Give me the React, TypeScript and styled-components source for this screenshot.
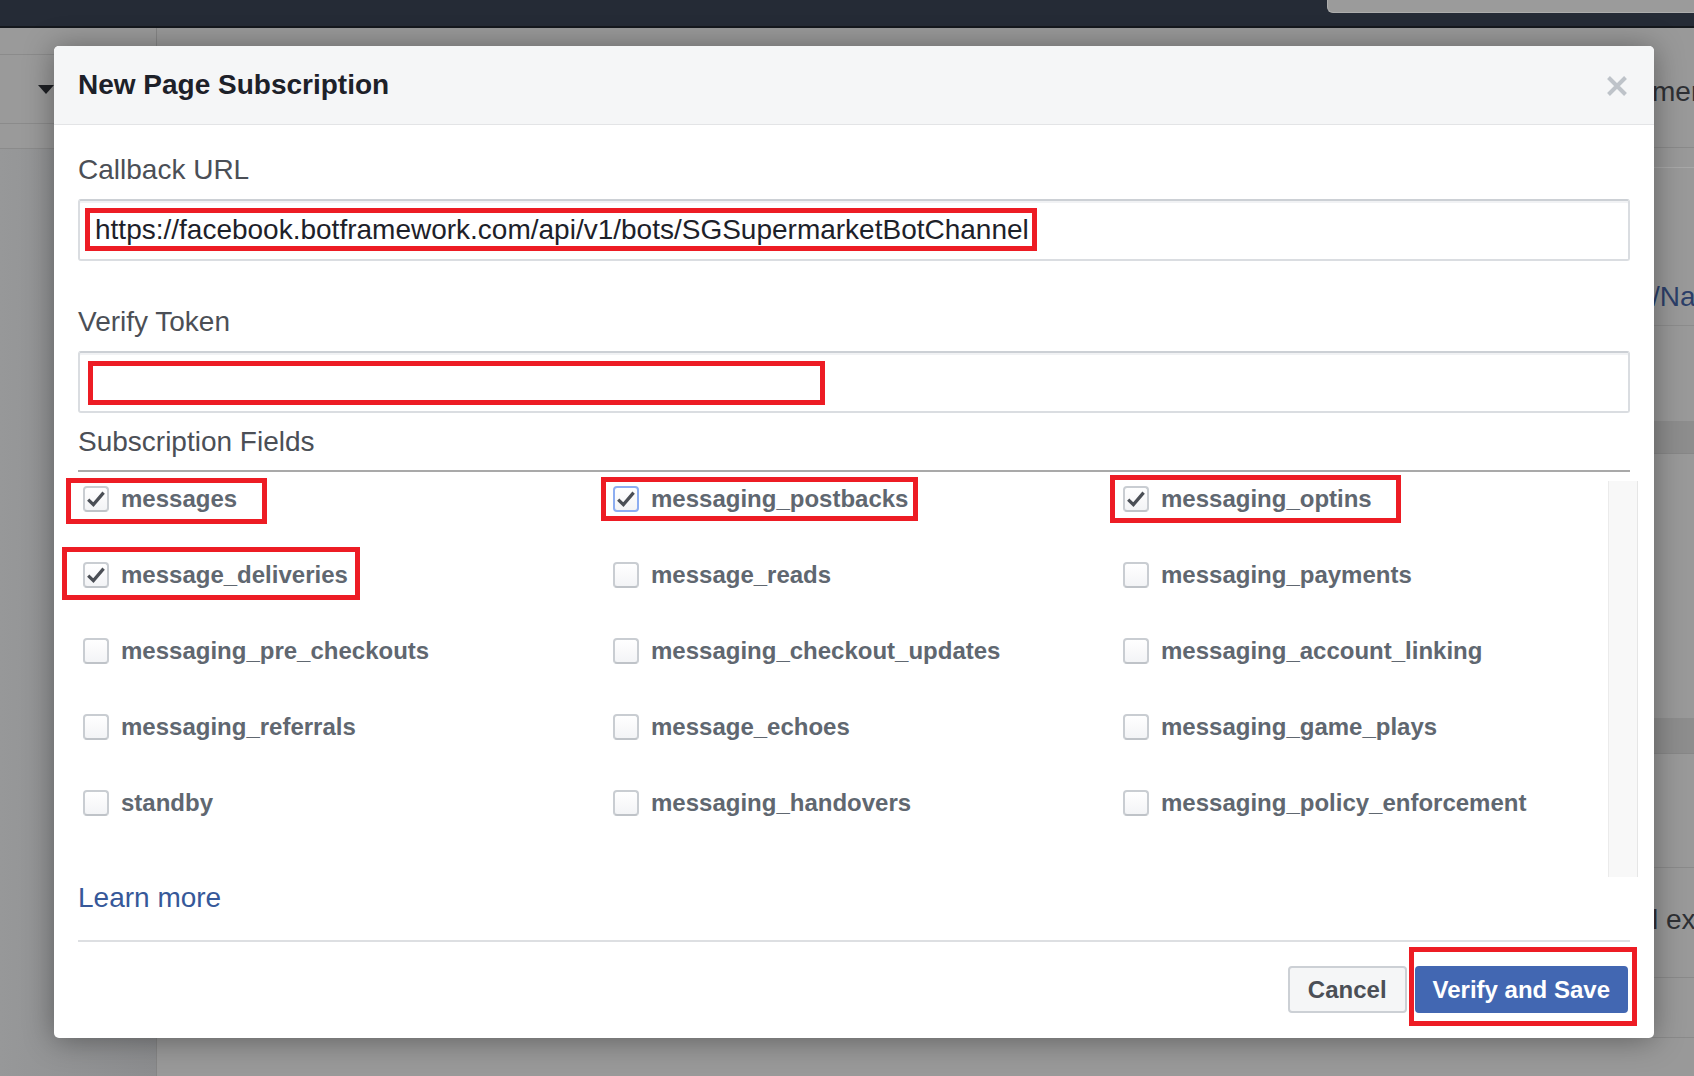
import React from "react";
import styled, { createGlobalStyle, css } from "styled-components";

const GlobalStyle = createGlobalStyle`
  html, body { margin: 0; padding: 0; }
  body {
    font-family: "Liberation Sans", Arial, Helvetica, sans-serif;
    background: #959595;
    overflow: hidden;
  }
  * { box-sizing: border-box; }
`;

/* ---------- dimmed page behind the dialog ---------- */

const Page = styled.div`
  position: relative;
  width: 1694px;
  height: 1076px;
  display: flex;
  flex-direction: column;
  background: #959595;
  overflow: hidden;
`;

const TopBar = styled.header`
  flex: none;
  height: 28px;
  background: #252b36;
  border-bottom: 2px solid #15181d;
  display: flex;
  justify-content: flex-end;
  align-items: flex-start;
`;

const SearchStub = styled.div`
  width: 367px;
  height: 13px;
  background: #9b9b9b;
  border-left: 1px solid #adadad;
  border-bottom: 1px solid #adadad;
  border-bottom-left-radius: 6px;
`;

const PageBody = styled.div`
  flex: 1;
  display: flex;
`;

const Sidebar = styled.aside`
  flex: none;
  width: 157px;
  display: flex;
  flex-direction: column;
  background: linear-gradient(90deg, #979899 0%, #8c8d8f 100%);
  border-right: 1px solid #858585;
`;

const SideBand = styled.div<{ $h: number; $pad?: number }>`
  height: ${(p) => p.$h}px;
  background: #9a9a9a;
  border-bottom: 1px solid #8b8b8b;
  display: flex;
  align-items: center;
  padding-left: ${(p) => p.$pad ?? 0}px;
`;

const Caret = styled.span`
  width: 0;
  height: 0;
  border-left: 8px solid transparent;
  border-right: 8px solid transparent;
  border-top: 9px solid #1e2024;
`;

const Main = styled.main`
  flex: 1;
  display: flex;
  justify-content: flex-end;
  background: #999999;
`;

const SideColumn = styled.div`
  width: 42px;
  display: flex;
  flex-direction: column;
  overflow: hidden;
`;

const StripRow = styled.div<{ $h: number; $top?: number; $band?: boolean; $line?: string }>`
  flex: none;
  height: ${(p) => p.$h}px;
  padding-top: ${(p) => p.$top ?? 0}px;
  background: ${(p) => (p.$band ? "#8d8d8d" : "transparent")};
  border-bottom: ${(p) => (p.$line ? `1px solid ${p.$line}` : "none")};
  white-space: nowrap;
  font-size: 28px;
  line-height: 32px;
`;

const StripText = styled.span<{ $link?: boolean }>`
  color: ${(p) => (p.$link ? "#2c3f69" : "#2e3034")};
`;

/* ---------- dialog ---------- */

const Dialog = styled.section`
  position: absolute;
  left: 54px;
  top: 46px;
  width: 1600px;
  background: #ffffff;
  border-radius: 5px;
  box-shadow: 0 2px 30px rgba(0, 0, 0, 0.38);
  display: flex;
  flex-direction: column;
`;

const DialogHeader = styled.div`
  height: 79px;
  padding: 0 26px 0 24px;
  background: #f5f6f7;
  border-bottom: 1px solid #e3e4e6;
  border-radius: 5px 5px 0 0;
  display: flex;
  align-items: center;
  justify-content: space-between;
`;

const Title = styled.h1`
  margin: 0;
  font-size: 28px;
  line-height: 32px;
  font-weight: bold;
  color: #1d2129;
`;

const CloseButton = styled.button`
  width: 22px;
  height: 22px;
  padding: 0;
  border: 0;
  background: none;
  display: flex;
  margin-top: 2px;
`;

const DialogBody = styled.div`
  padding: 29px 24px 0;
  display: flex;
  flex-direction: column;
`;

const FieldLabel = styled.label<{ $gap?: number }>`
  margin-top: ${(p) => p.$gap ?? 0}px;
  font-size: 28px;
  line-height: 32px;
  color: #4b4f56;
`;

const TextField = styled.div`
  position: relative;
  margin-top: 13px;
  height: 62px;
  padding: 0 15px;
  border: 2px solid #dadde1;
  border-top-color: #ccd0d5;
  border-radius: 3px;
  box-shadow: inset 0 2px 0 #f1f2f4;
  display: flex;
  align-items: center;
  font-size: 28px;
  line-height: 32px;
  color: #1d2129;
  white-space: nowrap;
`;

const Callout = styled.span<{ $x: number; $y: number; $w: number; $h: number }>`
  position: absolute;
  left: ${(p) => p.$x}px;
  top: ${(p) => p.$y}px;
  width: ${(p) => p.$w}px;
  height: ${(p) => p.$h}px;
  border: 5px solid #ed1c24;
  pointer-events: none;
`;

const SectionHeader = styled.div`
  margin-top: 13px;
  padding-bottom: 12px;
  border-bottom: 2px solid #a9a9a9;
  font-size: 28px;
  line-height: 32px;
  color: #4b4f56;
`;

const FieldsArea = styled.div`
  margin-top: 8px;
  margin-right: -8px;
  height: 397px;
  display: flex;
`;

const FieldGrid = styled.div`
  flex: 1;
  padding-top: 1px;
  display: grid;
  grid-template-columns: 530px 510px 1fr;
  grid-auto-rows: 35px;
  row-gap: 41px;
  align-content: start;
`;

const ScrollTrack = styled.div`
  flex: none;
  width: 30px;
  margin-top: 1px;
  background: #f8f8f8;
  border-left: 1px solid #ebebeb;
  border-right: 1px solid #e6e6e6;
`;

const Option = styled.label`
  position: relative;
  display: flex;
  align-items: center;
  gap: 12px;
  padding-left: 5px;
  font-size: 24px;
  line-height: 26px;
  font-weight: bold;
  color: #606770;
  white-space: nowrap;
`;

const Box = styled.span<{ $focused?: boolean }>`
  flex: none;
  width: 26px;
  height: 26px;
  border: 2px solid ${(p) => (p.$focused ? "#8cadf1" : "#c9cdd2")};
  border-bottom-color: ${(p) => (p.$focused ? "#8cadf1" : "#bfc3c8")};
  border-radius: 4px;
  background: linear-gradient(#ffffff, #f3f4f6);
  display: flex;
  align-items: center;
  justify-content: center;
`;

const LearnMore = styled.a`
  align-self: flex-start;
  margin-top: 5px;
  font-size: 28px;
  line-height: 32px;
  color: #365899;
  text-decoration: none;
`;

const Footer = styled.div`
  margin-top: 26px;
  padding: 24px 2px 25px 0;
  border-top: 2px solid #dddfe2;
  display: flex;
  justify-content: flex-end;
  gap: 8px;
`;

const Button = styled.button<{ $primary?: boolean }>`
  position: relative;
  height: 47px;
  border: 2px solid;
  border-radius: 4px;
  font-family: "Liberation Sans", Arial, Helvetica, sans-serif;
  font-size: 24px;
  font-weight: bold;
  line-height: 26px;
  ${(p) =>
    p.$primary
      ? css`
          padding: 0 16px;
          background: #4267b2;
          border-color: #4267b2;
          color: #ffffff;
        `
      : css`
          padding: 0 18px;
          background: #f5f6f7;
          border-color: #ccd0d5;
          color: #4b4f56;
        `}
`;

type Mark = { x: number; y: number; w: number; h: number };

type Field = {
  name: string;
  checked?: boolean;
  focused?: boolean;
  mark?: Mark;
};

const fields: Field[] = [
  { name: "messages", checked: true, mark: { x: -12, y: -3, w: 201, h: 46 } },
  { name: "messaging_postbacks", checked: true, focused: true, mark: { x: -7, y: -4, w: 317, h: 44 } },
  { name: "messaging_optins", checked: true, mark: { x: -8, y: -6, w: 291, h: 48 } },
  { name: "message_deliveries", checked: true, mark: { x: -16, y: -10, w: 298, h: 53 } },
  { name: "message_reads" },
  { name: "messaging_payments" },
  { name: "messaging_pre_checkouts" },
  { name: "messaging_checkout_updates" },
  { name: "messaging_account_linking" },
  { name: "messaging_referrals" },
  { name: "message_echoes" },
  { name: "messaging_game_plays" },
  { name: "standby" },
  { name: "messaging_handovers" },
  { name: "messaging_policy_enforcement" },
];

const CheckMark = () => (
  <svg width="22" height="22" viewBox="0 0 22 22" aria-hidden="true">
    <path d="M3.2 11.6 L8.4 16.6 L18.6 4.6" fill="none" stroke="#4b4f56" strokeWidth="3.2" strokeLinejoin="miter" />
  </svg>
);

const CloseIcon = () => (
  <svg width="22" height="22" viewBox="0 0 22 22" aria-hidden="true">
    <path d="M2.5 2.5 L19.5 19.5 M19.5 2.5 L2.5 19.5" stroke="#bec3c9" strokeWidth="4" fill="none" />
  </svg>
);

export default function App() {
  return (
    <>
      <GlobalStyle />
      <Page>
        <TopBar>
          <SearchStub />
        </TopBar>
        <PageBody>
          <Sidebar>
            <SideBand $h={27} />
            <SideBand $h={69} $pad={38}>
              <Caret />
            </SideBand>
            <SideBand $h={25} />
          </Sidebar>
          <Main>
            <SideColumn>
              <StripRow $h={120} $top={48} $line="#8a8a8a">
                <StripText>mer</StripText>
              </StripRow>
              <StripRow $h={20} $line="#a8a8a8" />
              <StripRow $h={158} $top={113} $line="#8c8c8c">
                <StripText $link>/Na</StripText>
              </StripRow>
              <StripRow $h={95} />
              <StripRow $h={33} $band $line="#878787" />
              <StripRow $h={264} />
              <StripRow $h={36} $band $line="#878787" />
              <StripRow $h={114} $line="#8a8a8a" />
              <StripRow $h={110} $top={36} $line="#8a8a8a">
                <StripText>l ex</StripText>
              </StripRow>
              <StripRow $h={60} $line="#8a8a8a" />
            </SideColumn>
          </Main>
        </PageBody>

        <Dialog role="dialog" aria-label="New Page Subscription">
          <DialogHeader>
            <Title>New Page Subscription</Title>
            <CloseButton aria-label="Close">
              <CloseIcon />
            </CloseButton>
          </DialogHeader>
          <DialogBody>
            <FieldLabel>Callback URL</FieldLabel>
            <TextField>
              https://facebook.botframework.com/api/v1/bots/SGSupermarketBotChannel
              <Callout $x={5} $y={7} $w={952} $h={43} />
            </TextField>
            <FieldLabel $gap={45}>Verify Token</FieldLabel>
            <TextField>
              <Callout $x={8} $y={8} $w={737} $h={44} />
            </TextField>
            <SectionHeader>Subscription Fields</SectionHeader>
            <FieldsArea>
              <FieldGrid>
                {fields.map((f) => (
                  <Option key={f.name}>
                    <Box $focused={f.focused}>{f.checked && <CheckMark />}</Box>
                    {f.name}
                    {f.mark && <Callout $x={f.mark.x} $y={f.mark.y} $w={f.mark.w} $h={f.mark.h} />}
                  </Option>
                ))}
              </FieldGrid>
              <ScrollTrack />
            </FieldsArea>
            <LearnMore href="#">Learn more</LearnMore>
            <Footer>
              <Button>Cancel</Button>
              <Button $primary>
                Verify and Save
                <Callout $x={-8} $y={-21} $w={228} $h={79} />
              </Button>
            </Footer>
          </DialogBody>
        </Dialog>
      </Page>
    </>
  );
}
